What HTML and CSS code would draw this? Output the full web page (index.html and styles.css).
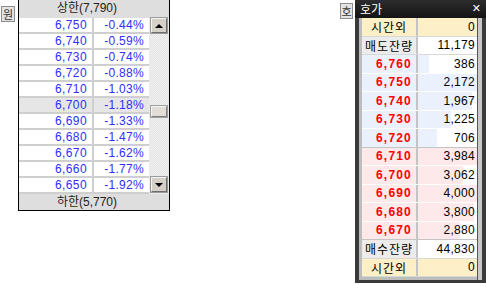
FILE: index.html
```html
<!DOCTYPE html>
<html lang="ko">
  <head>
    <meta charset="UTF-8" />
    <title>호가</title>
    <link rel="stylesheet" href="styles.css">
  </head>
  <body>
    <div class="screen">
      <div class="group">
        <button class="tag-btn tag-won">원</button>
        <section class="limit-list">
          <div class="limit-head">상한(7,790)</div>
          <div class="limit-body">
            <div class="limit-rows">
              <div class="limit-row"><span class="price">6,750</span><span class="rate">-0.44%</span></div>
              <div class="limit-row"><span class="price">6,740</span><span class="rate">-0.59%</span></div>
              <div class="limit-row"><span class="price">6,730</span><span class="rate">-0.74%</span></div>
              <div class="limit-row"><span class="price">6,720</span><span class="rate">-0.88%</span></div>
              <div class="limit-row"><span class="price">6,710</span><span class="rate">-1.03%</span></div>
              <div class="limit-row current"><span class="price">6,700</span><span class="rate">-1.18%</span></div>
              <div class="limit-row"><span class="price">6,690</span><span class="rate">-1.33%</span></div>
              <div class="limit-row"><span class="price">6,680</span><span class="rate">-1.47%</span></div>
              <div class="limit-row"><span class="price">6,670</span><span class="rate">-1.62%</span></div>
              <div class="limit-row"><span class="price">6,660</span><span class="rate">-1.77%</span></div>
              <div class="limit-row"><span class="price">6,650</span><span class="rate">-1.92%</span></div>
            </div>
            <div class="scrollbar">
              <div class="scroll-btn"><span class="arrow-up"></span></div>
              <div class="scroll-track"><div class="scroll-thumb"></div></div>
              <div class="scroll-btn"><span class="arrow-down"></span></div>
            </div>
          </div>
          <div class="limit-foot">하한(5,770)</div>
        </section>
      </div>

      <div class="group group-right">
        <button class="tag-btn tag-ho">호</button>
        <section class="window">
          <div class="window-title">
            <span>호가</span>
            <span class="close">✕</span>
          </div>
          <div class="window-body">
            <div class="book">
              <div class="book-row after-hours"><span class="label">시간외</span><span class="value">0</span></div>
              <div class="book-row total"><span class="label">매도잔량</span><span class="value">11,179</span></div>
              <div class="book-row ask"><span class="label">6,760</span><span class="value" style="--fill: 18%">386</span></div>
              <div class="book-row ask"><span class="label">6,750</span><span class="value" style="--fill: 100%">2,172</span></div>
              <div class="book-row ask"><span class="label">6,740</span><span class="value" style="--fill: 91%">1,967</span></div>
              <div class="book-row ask"><span class="label">6,730</span><span class="value" style="--fill: 56%">1,225</span></div>
              <div class="book-row ask last"><span class="label">6,720</span><span class="value" style="--fill: 33%">706</span></div>
              <div class="book-row bid"><span class="label">6,710</span><span class="value" style="--fill: 100%">3,984</span></div>
              <div class="book-row bid"><span class="label">6,700</span><span class="value" style="--fill: 77%">3,062</span></div>
              <div class="book-row bid"><span class="label">6,690</span><span class="value" style="--fill: 100%">4,000</span></div>
              <div class="book-row bid"><span class="label">6,680</span><span class="value" style="--fill: 95%">3,800</span></div>
              <div class="book-row bid last"><span class="label">6,670</span><span class="value" style="--fill: 72%">2,880</span></div>
              <div class="book-row total"><span class="label">매수잔량</span><span class="value">44,830</span></div>
              <div class="book-row after-hours"><span class="label">시간외</span><span class="value">0</span></div>
            </div>
            <div class="edge"></div>
          </div>
        </section>
      </div>
    </div>
  </body>
</html>
```

FILE: styles.css
```css
* {
  margin: 0;
  padding: 0;
  box-sizing: border-box;
}

body {
  background: #ffffff;
  font-family: "Liberation Sans", "Noto Sans CJK KR", sans-serif;
  font-size: 12px;
  color: #000000;
}

.screen {
  display: flex;
  width: 486px;
  height: 285px;
  overflow: hidden;
}

.group {
  display: flex;
  align-items: flex-start;
}

.group-right {
  margin-left: auto;
}

/* small tab buttons */
.tag-btn {
  font-family: "Noto Sans CJK KR", sans-serif;
  font-size: 11px;
  line-height: 13px;
  background: #e4e4e4;
  border: 1px solid #8c8c8c;
  color: #333333;
  padding: 0;
}

.tag-won {
  width: 14px;
  height: 16px;
  margin: 6px 3px 0 1px;
}

.tag-ho {
  width: 13px;
  height: 16px;
  margin: 3px 2px 0 0;
}

/* limit price list */
.limit-list {
  width: 152px;
  border: 1px solid #000000;
  border-top: none;
  background: #dcdcdc;
}

.limit-head,
.limit-foot {
  height: 17px;
  line-height: 17px;
  text-align: center;
  padding-right: 14px;
  font-family: "Liberation Sans", "Noto Sans CJK KR", sans-serif;
  color: #222222;
  background: #dedede;
}

.limit-head {
  height: 18px;
}

.limit-foot {
  height: 16px;
  line-height: 16px;
}

.limit-body {
  display: flex;
  height: 176px;
}

.limit-rows {
  width: 130px;
  background: #ffffff;
}

.limit-row {
  display: flex;
  height: 16px;
  line-height: 14px;
  color: #3030ff;
  border-bottom: 2px solid #cfcfcf;
}

.limit-row.current {
  background: #e6e6e6;
}

.limit-row .price {
  width: 75px;
  text-align: right;
  padding-right: 5px;
  border-right: 2px solid #cfcfcf;
  letter-spacing: 0.4px;
}

.limit-row .rate {
  width: 55px;
  text-align: right;
  padding-right: 5px;
  letter-spacing: 0.3px;
}

.scrollbar {
  display: flex;
  flex-direction: column;
  width: 20px;
  padding: 0 2px 2px 2px;
  background: repeating-conic-gradient(#f2f2f2 0 25%, #e2e2e2 0 50%) 0 0 / 2px 2px;
}

.scroll-btn {
  display: flex;
  align-items: center;
  justify-content: center;
  height: 15px;
  background: #d4d0c8;
  border: 1px solid;
  border-color: #f4f4f4 #6e6e6e #6e6e6e #f4f4f4;
  outline: 1px solid #9a9a9a;
}

.scroll-track {
  flex: 1;
}

.scroll-thumb {
  height: 11px;
  margin-top: 73px;
  background: #e0ddd6;
  border: 1px solid;
  border-color: #f4f4f4 #808080 #808080 #f4f4f4;
  outline: 1px solid #a0a0a0;
}

.arrow-up,
.arrow-down {
  width: 0;
  height: 0;
  border-left: 4px solid transparent;
  border-right: 4px solid transparent;
}

.arrow-up {
  border-bottom: 4px solid #000000;
}

.arrow-down {
  border-top: 4px solid #000000;
}

/* order book window */
.window {
  width: 131px;
  height: 283px;
  background: #3a3a3a;
  display: flex;
  flex-direction: column;
}

.window-title {
  display: flex;
  justify-content: space-between;
  height: 18px;
  line-height: 17px;
  padding: 0 5px 0 5px;
  background: linear-gradient(#2c2c2c, #141414);
  color: #ffffff;
  font-family: "Noto Sans CJK KR", sans-serif;
  font-size: 12px;
}

.window-title .close {
  font-family: "DejaVu Sans", sans-serif;
  font-size: 11px;
}

.window-body {
  flex: 1;
  display: flex;
  padding: 0 0 3px 4px;
}

.book {
  width: 118px;
  display: flex;
  flex-direction: column;
  border: 3px solid #bdbdbd;
  border-top: none;
  border-right: none;
  background: #ffffff;
}

.edge {
  width: 5px;
  border-left: 1px solid #555555;
  background: #c8c8c8;
}

.book-row {
  flex: 1;
  display: flex;
  align-items: center;
  border-bottom: 1px solid #ffffff;
}

.book-row .label {
  width: 56px;
  height: 100%;
  display: flex;
  align-items: center;
  justify-content: center;
  border-right: 2px solid #c4c4c4;
  font-family: "Noto Sans CJK KR", sans-serif;
  letter-spacing: 1px;
}

.book-row .value {
  flex: 1;
  height: 100%;
  display: flex;
  align-items: center;
  justify-content: flex-end;
  padding-right: 2px;
  letter-spacing: 0.3px;
}

.after-hours {
  background: #fdf0c6;
  border-bottom: 1px solid #d8d8d8;
}

.total .label {
  background: #ececec;
}

.total {
  border-bottom: 1px solid #d8d8d8;
}

.ask .label,
.bid .label {
  justify-content: flex-end;
  padding-right: 4px;
  color: #ff0000;
  font-family: "Liberation Sans", sans-serif;
  font-weight: bold;
  letter-spacing: 1.2px;
}

.ask .label {
  background: #eaf1fc;
}

.ask .value {
  background: linear-gradient(to right, #eaf1fc var(--fill), #ffffff var(--fill));
}

.bid .label {
  background: #fde9e9;
}

.bid .value {
  background: linear-gradient(to right, #fde9e9 var(--fill), #ffffff var(--fill));
}

.book-row.last {
  border-bottom: 1px solid #c4c4c4;
}
```
